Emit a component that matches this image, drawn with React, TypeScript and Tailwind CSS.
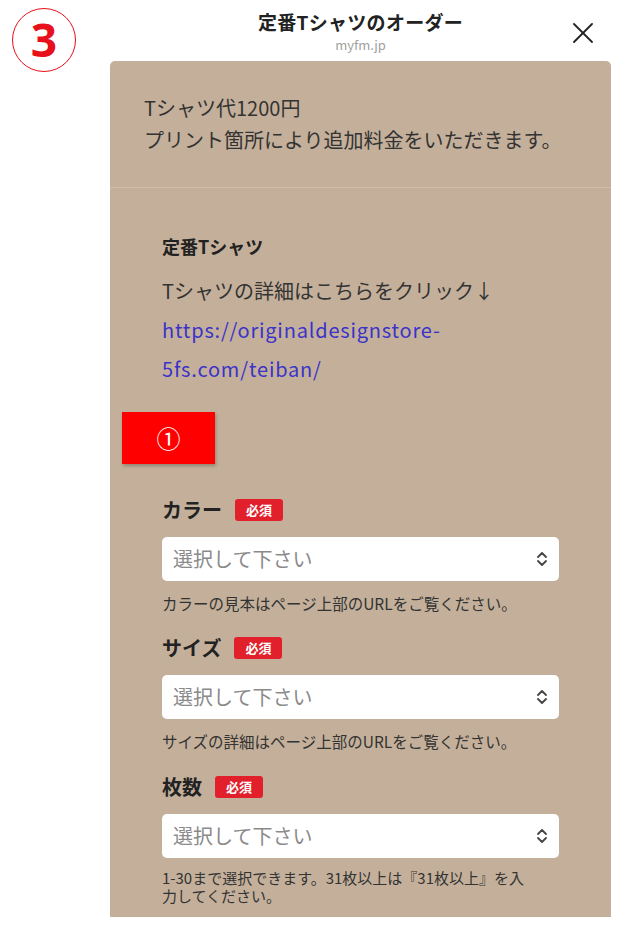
import React from "react";

function Chevrons() {
  return (
    <svg width="12" height="16" viewBox="0 0 12 16" fill="none" stroke="#444" strokeWidth="1.8" strokeLinecap="round" strokeLinejoin="round">
      <path d="M2 6 L6 2 L10 6" />
      <path d="M2 10 L6 14 L10 10" />
    </svg>
  );
}

function Field({ label, help, mt }: { label: string; help: React.ReactNode; mt: string }) {
  return (
    <div className={mt}>
      <div className="flex items-center gap-[13px] h-[28px]">
        <span className="text-[20px] leading-[28px] font-bold text-[#222]">{label}</span>
        <span className="h-[22px] w-[48px] rounded-[3px] bg-[#e1202b] text-white text-[13px] leading-[22px] font-bold flex items-center justify-center">必須</span>
      </div>
      <div className="mt-[13px] h-[44px] bg-white rounded-[5px] flex items-center justify-between pl-[11px] pr-[11px]">
        <span className="text-[20px] text-[#8a8a8a] leading-[44px]">選択して下さい</span>
        <Chevrons />
      </div>
      {help}
    </div>
  );
}

export default function App() {
  return (
    <div className="relative w-[640px] h-[940px] bg-white font-['Noto_Sans_CJK_JP','Noto_Sans',sans-serif] text-[#333]">
      <div className="absolute left-[12px] top-[8px] w-[64px] h-[64px] rounded-full border-[1.5px] border-[#e8101a] flex items-center justify-center">
        <span className="text-[#e8101a] text-[46px] font-bold leading-none font-['Noto_Sans',sans-serif] -mt-[2px]">3</span>
      </div>
      <div className="pl-[110px] pr-[29px]">
        <div className="relative h-[61px] flex flex-col items-center">
          <div className="pt-[10px] text-[19px] leading-[24px] font-bold text-[#222] tracking-[0.3px]">定番Tシャツのオーダー</div>
          <div className="mt-[3px] text-[13px] leading-[16px] text-[#a0a0a0]">myfm.jp</div>
          <svg className="absolute right-[18px] top-[23px]" width="20" height="20" viewBox="0 0 20 20" stroke="#222" strokeWidth="1.8" strokeLinecap="round">
            <path d="M1 1 L19 19" />
            <path d="M19 1 L1 19" />
          </svg>
        </div>
        <div className="bg-[#c4b09a] rounded-t-[5px]">
          <div className="pt-[31px] pb-[31px] pl-[34px] pr-[20px] text-[20px] leading-[32px] text-[#333] border-b border-[#cfbda8]">
            <div>Tシャツ代1200円</div>
            <div>プリント箇所により追加料金をいただきます。</div>
          </div>
          <div className="pt-[44px] pl-[52px] pr-[52px] pb-[12px]">
            <div className="text-[18px] leading-[28px] font-bold text-[#222]">定番Tシャツ</div>
            <div className="mt-[11px] text-[20px] leading-[39px]">
              <div>Tシャツの詳細はこちらをクリック↓</div>
              <div className="text-[#3b33c9] tracking-[0.8px]">https://originaldesignstore-</div>
              <div className="text-[#3b33c9] tracking-[0.8px]">5fs.com/teiban/</div>
            </div>
            <div className="mt-[24px] -ml-[40px] w-[93px] h-[52px] bg-[#ff0000] shadow-[1px_2px_3px_rgba(0,0,0,0.25)] flex items-center justify-center text-white text-[24px] leading-none">①</div>
            <Field
              label="カラー"
              mt="mt-[32px]"
              help={<div className="mt-[12px] text-[15.5px] leading-[20px] text-[#333]">カラーの見本はページ上部のURLをご覧ください。</div>}
            />
            <Field
              label="サイズ"
              mt="mt-[21px]"
              help={<div className="mt-[12px] text-[15.5px] leading-[20px] text-[#333]">サイズの詳細はページ上部のURLをご覧ください。</div>}
            />
            <Field
              label="枚数"
              mt="mt-[22px]"
              help={
                <div className="mt-[11px] text-[15px] leading-[18px] text-[#333]">
                  <div>1-30まで選択できます。31枚以上は『31枚以上』を入</div>
                  <div>力してください。</div>
                </div>
              }
            />
          </div>
        </div>
      </div>
    </div>
  );
}
